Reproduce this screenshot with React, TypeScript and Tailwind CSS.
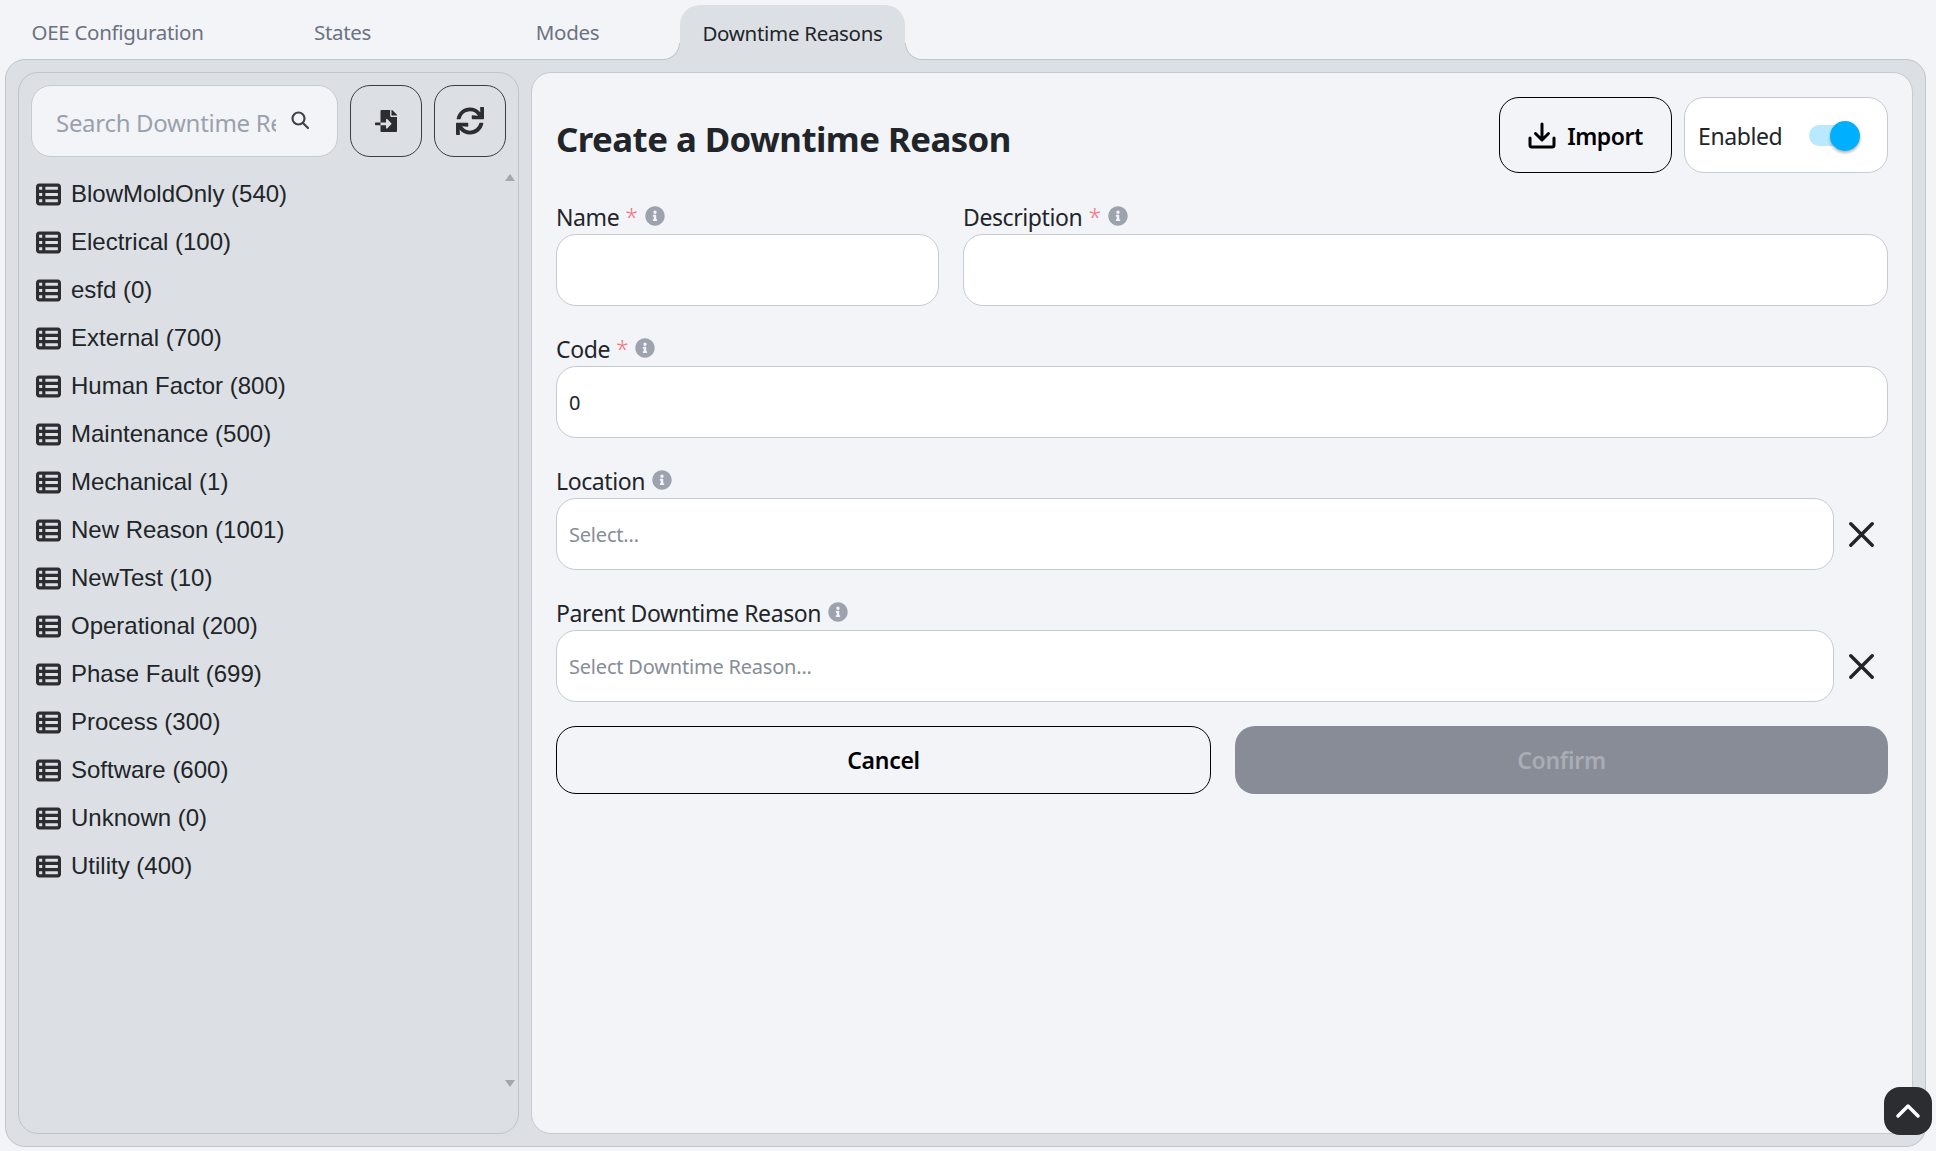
import { FaFileImport, FaInfoCircle, FaSync } from "react-icons/fa";
import { FaTableList } from "react-icons/fa6";

const REASONS = [
  "BlowMoldOnly (540)",
  "Electrical (100)",
  "esfd (0)",
  "External (700)",
  "Human Factor (800)",
  "Maintenance (500)",
  "Mechanical (1)",
  "New Reason (1001)",
  "NewTest (10)",
  "Operational (200)",
  "Phase Fault (699)",
  "Process (300)",
  "Software (600)",
  "Unknown (0)",
  "Utility (400)",
];

const TABS = ["OEE Configuration", "States", "Modes"];

function FieldLabel({ text, required }: { text: string; required?: boolean }) {
  return (
    <div className="flex h-[37px] items-center gap-[7px] pt-[3px] text-[23px] tracking-[-0.4px] text-[#212529]">
      <span>
        {text}
        {required && <span className="ml-[6px] font-light text-[#f8717c]">*</span>}
      </span>
      <FaInfoCircle className="mb-[3px] text-[20px] text-[#9ca3af]" />
    </div>
  );
}

function ClearIcon() {
  return (
    <svg viewBox="0 0 25 25" className="h-[25px] w-[25px] shrink-0 text-[#212529]" fill="none" stroke="currentColor" strokeWidth="3.4" strokeLinecap="round">
      <path d="M1.8 1.800 23.200 23.200M23.200 1.800 1.800 23.200" />
    </svg>
  );
}

function SelectField({ label, placeholder }: { label: string; placeholder: string }) {
  return (
    <div>
      <FieldLabel text={label} />
      <div className="flex items-center">
        <input
          readOnly
          placeholder={placeholder}
          className="h-[72px] w-[1278px] rounded-[20px] border border-[#c6cad1] bg-white px-[12px] text-[20px] tracking-[-0.2px] outline-none placeholder:text-[#868d97]"
        />
        <span className="ml-[15px]">
          <ClearIcon />
        </span>
      </div>
    </div>
  );
}

export default function App() {
  return (
    <div className="relative h-[1151px] w-full overflow-hidden bg-[#f3f4f8] font-['Noto_Sans',sans-serif]">
      {/* tabs */}
      <div className="flex h-[60px] items-end pl-[5px]">
        {TABS.map((tab) => (
          <div key={tab} className="flex h-[55px] w-[225px] items-center justify-center pb-[1px] text-[20.500px] tracking-[-0.3px] text-[#6b7280]">
            {tab}
          </div>
        ))}
        <div className="relative z-10 -mb-px flex h-[56px] w-[225px] items-center justify-center rounded-t-[20px] bg-[#dcdfe3] text-[20.500px] tracking-[-0.3px] text-[#212529]">
          Downtime Reasons
          <span className="absolute bottom-px left-[-17px] h-[17px] w-[17px] bg-[#dcdfe3]">
            <span className="block h-full w-full rounded-br-[17px] border-r border-b border-[#c0c4cb] bg-[#f3f4f8]" />
          </span>
          <span className="absolute right-[-17px] bottom-px h-[17px] w-[17px] bg-[#dcdfe3]">
            <span className="block h-full w-full rounded-bl-[17px] border-b border-l border-[#c0c4cb] bg-[#f3f4f8]" />
          </span>
        </div>
      </div>

      {/* main panel */}
      <div className="mx-[5px] mr-[10px] -mt-px flex h-[1088px] gap-[12px] rounded-[20px] border border-[#c0c4cb] bg-[#dcdfe3] p-[12px]">
        <aside className="relative flex w-[501px] shrink-0 flex-col rounded-[20px] border border-[#c0c4cb] px-[12px] pt-[12px]">
          <div className="flex gap-[12px]">
            <div className="flex h-[72px] w-[307px] items-center rounded-[20px] border border-[#c6cad1] bg-[#f3f4f8] pl-[24px]">
              <input
                readOnly
                placeholder="Search Downtime Reasons"
                className="w-[220px] bg-transparent pt-[3px] text-[24px] tracking-[-0.3px] outline-none placeholder:text-[#9aa1ad]"
              />
              <svg viewBox="0 0 18 18" className="mb-[3px] ml-[15px] h-[18px] w-[18px] text-[#3f444b]" fill="none" stroke="currentColor" strokeWidth="2.200" strokeLinecap="round">
                <circle cx="7.500" cy="7.500" r="6" />
                <path d="m12 12 5 5" />
              </svg>
            </div>
            <button type="button" className="flex h-[72px] w-[72px] items-center justify-center rounded-[20px] border border-[#3a3e44] text-[#2b2d31]">
              <FaFileImport className="text-[22px]" />
            </button>
            <button type="button" className="flex h-[72px] w-[72px] items-center justify-center rounded-[20px] border border-[#3a3e44] text-[#2b2d31]">
              <FaSync className="text-[28px]" />
            </button>
          </div>
          <ul className="mt-[13px] flex flex-col font-['Liberation_Sans',sans-serif] text-[24px] text-[#212529]">
            {REASONS.map((reason) => (
              <li key={reason} className="flex h-[48px] items-center gap-[10px] pl-[5px]">
                <FaTableList className="text-[25px] text-[#2b2d31]" />
                <span>{reason}</span>
              </li>
            ))}
          </ul>
          {/* scrollbar arrows */}
          <span className="absolute top-[101px] right-[3px] h-0 w-0 border-x-[5px] border-b-[7px] border-x-transparent border-b-[#a3a7ae]" />
          <span className="absolute right-[3px] bottom-[46px] h-0 w-0 border-x-[5px] border-t-[7px] border-x-transparent border-t-[#a3a7ae]" />
        </aside>

        <main className="flex flex-1 flex-col gap-[23px] rounded-[20px] border border-[#c6cad1] bg-[#f3f4f8] px-[24px] pt-[24px]">
          <div className="mb-px flex h-[76px] items-center">
            <h1 className="flex-1 pt-[8px] text-[34.800px] font-bold tracking-[-0.55px] text-[#212529]">Create a Downtime Reason</h1>
            <button type="button" className="flex h-[76px] w-[173px] items-center justify-center gap-[11px] rounded-[20px] border border-black pt-[2px] text-[23px] font-semibold tracking-[-0.5px] text-black">
              <svg viewBox="0 0 28 27" className="mb-[2px] h-[27px] w-[28px]" fill="none" stroke="currentColor" strokeWidth="3" strokeLinecap="round" strokeLinejoin="round">
                <path d="M2 16v7a2 2 0 0 0 2 2h20a2 2 0 0 0 2-2v-7M14 2v16M7.500 11.500 14 18l6.500-6.500" />
              </svg>
              Import
            </button>
            <div className="ml-[12px] flex h-[76px] w-[204px] items-center rounded-[20px] border border-[#c6cad1] bg-white pl-[13px] text-[23px] tracking-[-0.4px] text-[#212529]">
              <span className="pt-[2px]">Enabled</span>
              <span className="relative ml-[27px] h-[21px] w-[49px] rounded-full bg-[#b9e9ff]">
                <span className="absolute top-[-4px] right-[-2px] h-[30px] w-[30px] rounded-full bg-[#00b0ff] shadow-[0_2px_3px_rgba(0,0,0,0.3)]" />
              </span>
            </div>
          </div>

          <div className="flex gap-[24px]">
            <div className="w-[383px]">
              <FieldLabel text="Name" required />
              <input readOnly className="h-[72px] w-full rounded-[20px] border border-[#c6cad1] bg-white px-[12px] outline-none" />
            </div>
            <div className="flex-1">
              <FieldLabel text="Description" required />
              <input readOnly className="h-[72px] w-full rounded-[20px] border border-[#c6cad1] bg-white px-[12px] outline-none" />
            </div>
          </div>

          <div>
            <FieldLabel text="Code" required />
            <input readOnly value="0" className="h-[72px] w-full rounded-[20px] border border-[#c6cad1] bg-white px-[12px] pt-[1px] text-[20px] text-[#212529] outline-none" />
          </div>

          <SelectField label="Location" placeholder="Select..." />
          <SelectField label="Parent Downtime Reason" placeholder="Select Downtime Reason..." />

          <div className="mt-px flex gap-[24px]">
            <button type="button" className="h-[68px] flex-1 rounded-[20px] border border-black pt-[1px] text-[23px] font-semibold tracking-[-0.3px] text-black">
              Cancel
            </button>
            <button type="button" className="h-[68px] flex-1 rounded-[20px] bg-[#878c96] pt-[1px] text-[23px] font-semibold tracking-[-0.3px] text-[#a9adb5]">
              Confirm
            </button>
          </div>
        </main>
      </div>

      {/* back to top */}
      <button type="button" className="absolute top-[1087px] left-[1884px] flex h-[48px] w-[48px] items-center justify-center rounded-[16px] bg-[#2b2d31]">
        <svg viewBox="0 0 24 14" className="h-[14px] w-[24px]" fill="none" stroke="white" strokeWidth="3.400" strokeLinecap="round" strokeLinejoin="round">
          <path d="M2 12 12 2l10 10" />
        </svg>
      </button>
    </div>
  );
}
